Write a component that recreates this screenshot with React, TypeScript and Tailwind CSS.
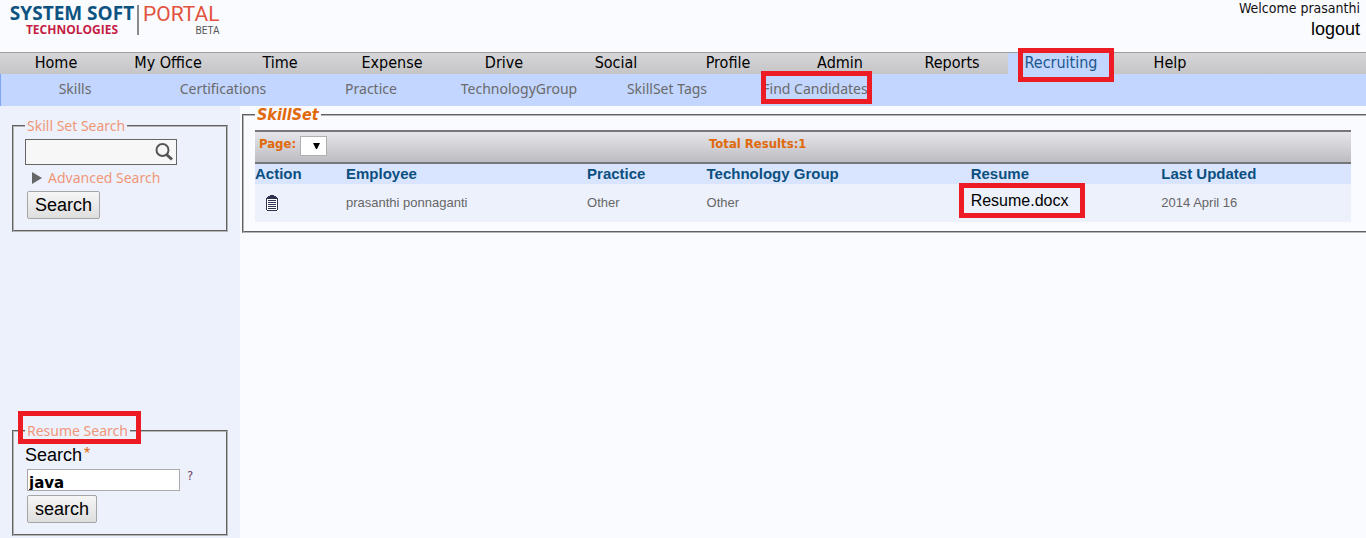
import React from 'react';

const tahoma = "font-['DejaVu_Sans_Condensed','DejaVu_Sans',sans-serif]";
const humanist = "font-['Noto_Sans',sans-serif]";
const arial = "font-['Liberation_Sans',Arial,sans-serif]";

const mainNav = ['Home', 'My Office', 'Time', 'Expense', 'Drive', 'Social', 'Profile', 'Admin', 'Reports', 'Recruiting', 'Help'];
const subNav = ['Skills', 'Certifications', 'Practice', 'TechnologyGroup', 'SkillSet Tags', 'Find Candidates'];

function Highlight({ className }: { className: string }) {
  return <span aria-hidden="true" className={`pointer-events-none absolute z-10 border-5 border-[#ed1c24] ${className}`} />;
}

function Logo() {
  return (
    <a href="#home" className="ml-[11px] flex items-start pt-[3px] font-['Open_Sans',sans-serif]">
      <span className="flex w-[126px] flex-col items-center pr-1 font-bold">
        <span className="text-[19px] leading-[20px] whitespace-nowrap text-[#0d5382]">SYSTEM SOFT</span>
        <span className="text-[12px] leading-[14px] text-[#c41e45]">TECHNOLOGIES</span>
      </span>
      <span className="mt-0.5 mr-1 h-[30px] w-0.5 bg-[#8b8b8b]" />
      <span className="flex flex-col items-end font-['Roboto',sans-serif]">
        <span className="text-[21px] leading-[22px] text-[#e2533f]">PORTAL</span>
        <span className="text-[10px] leading-[12px] text-[#555]">BETA</span>
      </span>
    </a>
  );
}

function ClipboardIcon() {
  return (
    <svg width="12" height="16" viewBox="0 0 12 16" shapeRendering="crispEdges" aria-hidden="true">
      <path d="M4 0h4v1h2v1h1v1h1v12h-1v1H1v-1H0V3h1V2h1V1h2z" fill="#2d3350" />
      <path d="M1 4h10v11H1z" fill="#fff" />
      <path d="M2 5h8v1H2zM2 7h8v1H2zM2 9h8v1H2zM2 11h8v1H2zM2 13h8v1H2z" fill="#2d3350" />
    </svg>
  );
}

function SearchIcon() {
  return (
    <svg width="20" height="20" viewBox="0 0 20 20" aria-hidden="true" fill="none" stroke="#555">
      <circle cx="8.500" cy="8" r="6" strokeWidth="2" />
      <path d="M12.500 12.500 L18 17.500" strokeWidth="3" />
    </svg>
  );
}

const box = 'border-2 [border-style:groove] border-[#b5b5b5]';
const legend = `px-0.5 text-[14px] leading-[20px] text-[#f0977a] ${humanist}`;
const button = `block rounded-[2px] border border-[#a5a5a5] bg-linear-to-b from-[#f6f6f6] to-[#dedede] px-[7px] h-7 text-[18px] leading-[24px] text-black ${arial}`;

export default function App() {
  return (
    <div className={`flex min-h-screen flex-col bg-[#fafbff] ${tahoma}`}>
      <header className="flex h-[52px] justify-between">
        <Logo />
        <div className="flex flex-col items-end pr-[6px]">
          <span className="text-[14px] leading-[16px] text-[#111]">Welcome prasanthi</span>
          <a href="#logout" className={`pt-0.5 text-[18px] leading-[22px] text-black ${arial}`}>logout</a>
        </div>
      </header>

      <nav aria-label="Main" className="flex h-[22px] border-t border-[#9c9c9c] bg-linear-to-b from-[#d6d6d8] to-[#c5c5c8]">
        {mainNav.map((item) => {
          const active = item === 'Recruiting';
          return (
            <a
              key={item}
              href="#nav"
              className={`relative text-center text-[16px] leading-[19px] ${active ? 'w-[106px] bg-[#c3d6ff] text-[#1a568c]' : 'w-28 text-black'}`}
            >
              {item}
              {active && <Highlight className="-top-[5px] left-[10px] h-[34px] w-24" />}
            </a>
          );
        })}
      </nav>
      <nav aria-label="Recruiting" className={`flex h-8 border-l border-[#7ea6f5] bg-[#c3d6ff] ${humanist}`}>
        {subNav.map((item) => (
          <a key={item} href="#sub" className="relative w-[148px] text-center text-[14px] leading-[30px] text-[#6a6a6a]">
            {item}
            {item === 'Find Candidates' && <Highlight className="-top-[3px] left-5 h-[33px] w-[111px]" />}
          </a>
        ))}
      </nav>

      <div className="flex grow">
        <aside className="flex w-60 shrink-0 flex-col justify-between bg-[#edf1fc] px-3 pt-2.5 pb-0.5">
          <form onSubmit={(e) => e.preventDefault()}>
            <fieldset className={`${box} h-[116px] px-[11px]`}>
              <legend className={legend}>Skill Set Search</legend>
              <div className="mt-[3px] flex h-[26px] w-[152px] items-center border border-[#666] bg-[#f7f7f7]">
                <input aria-label="Skill set" className="h-full min-w-0 grow bg-transparent px-1 outline-none" />
                <button type="submit" aria-label="Find" className="mr-0.5"><SearchIcon /></button>
              </div>
              <a href="#advanced" className={`ml-[7px] flex h-[26px] items-center gap-[6px] text-[14px] leading-[26px] text-[#f0977a] ${humanist}`}>
                <svg width="10" height="12" viewBox="0 0 10 12" aria-hidden="true"><path d="M0 0 L10 6 L0 12z" fill="#666" /></svg>
                Advanced Search
              </a>
              <button type="submit" className={`${button} ml-0.5`}>Search</button>
            </fieldset>
          </form>

          <form className="relative" onSubmit={(e) => e.preventDefault()}>
            <Highlight className="-top-[10px] left-1.5 h-[33px] w-[123px]" />
            <fieldset className={`${box} h-[115px] px-[11px]`}>
              <legend className={legend}>Resume Search</legend>
              <label htmlFor="resume" className={`flex h-[28px] text-[18px] leading-[28px] text-black ${arial}`}>
                Search<span className="pl-0.5 text-[16px] leading-[26px] text-[#e0690c]">*</span>
              </label>
              <div className="ml-0.5 flex items-start gap-[7px]">
                <input
                  id="resume"
                  defaultValue="java"
                  className="h-[22px] w-[153px] border border-[#a9a9a9] bg-white px-px pt-1.5 font-['DejaVu_Sans',sans-serif] text-[15px] font-bold text-black outline-none"
                />
                <span className="text-[13px] leading-[14px] text-[#704468]">?</span>
              </div>
              <button type="submit" className={`${button} mt-1 ml-0.5`}>search</button>
            </fieldset>
          </form>
        </aside>

        <main className="min-w-0 grow pl-0.5">
          <fieldset className={`${box} h-[127px] border-r-0 pr-[15px] pl-[11px]`}>
            <legend className="px-0.5 text-[16px] leading-[18px] font-bold text-[#e0690c] italic">SkillSet</legend>
            <div className="mt-1.5 grid h-[34px] grid-cols-[450px_1fr] border-y-2 border-[#77777a] bg-linear-to-b from-[#e6e6ea] to-[#bcbcc2] pl-1 text-[13px] font-bold text-[#e0690c]">
              <div className="flex gap-1">
                <label htmlFor="page" className="leading-[23px]">Page:</label>
                <span className="relative mt-1 h-5 w-[27px]">
                  <select id="page" className="h-full w-full appearance-none border border-[#b0b0b0] bg-white"><option></option></select>
                  <svg className="pointer-events-none absolute top-[7px] left-[13px]" width="7" height="6" viewBox="0 0 7 6" aria-hidden="true"><path d="M0 0h7L4 6H3z" /></svg>
                </span>
              </div>
              <span className="leading-[23px]">Total Results:1</span>
            </div>
            <table className={`w-full table-fixed bg-[#edf1fc] text-left ${arial}`}>
              <colgroup>
                <col className="w-[8.3%]" />
                <col className="w-[22%]" />
                <col className="w-[10.9%]" />
                <col className="w-[24.1%]" />
                <col className="w-[17.4%]" />
                <col />
              </colgroup>
              <thead>
                <tr className="h-5 bg-[#d9e5ff] text-[15px] leading-[20px] text-[#0b4f80]">
                  {['Action', 'Employee', 'Practice', 'Technology Group', 'Resume', 'Last Updated'].map((h) => (
                    <th key={h} scope="col" className="p-0 font-bold">{h}</th>
                  ))}
                </tr>
              </thead>
              <tbody>
                <tr className="h-[38px] text-[13px] text-[#666]">
                  <td className="p-0 pl-[11px]"><button type="button" aria-label="Details" className="block"><ClipboardIcon /></button></td>
                  <td className="p-0">prasanthi ponnaganti</td>
                  <td className="p-0">Other</td>
                  <td className="p-0">Other</td>
                  <td className="relative p-0 pb-1">
                    <a href="#resume" className="text-[16px] leading-[20px] text-black">Resume.docx</a>
                    <Highlight className="-top-px -left-[12px] h-[35px] w-[126px]" />
                  </td>
                  <td className="p-0">2014 April 16</td>
                </tr>
              </tbody>
            </table>
          </fieldset>
        </main>
      </div>
    </div>
  );
}
